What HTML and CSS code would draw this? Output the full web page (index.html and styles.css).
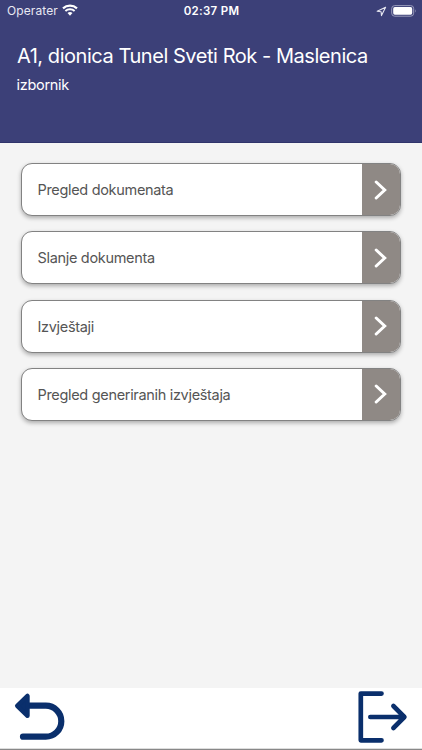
FILE: index.html
```html
<!DOCTYPE html>
<html lang="hr">
<head>
<meta charset="utf-8">
<meta name="viewport" content="width=device-width, initial-scale=1">
<title>A1, dionica Tunel Sveti Rok - Maslenica</title>
<link rel="stylesheet" href="styles.css">
</head>
<body>
<header class="header">
  <div class="status">
    <div class="status-left">
      <span class="carrier">Operater</span>
      <svg class="wifi" width="16" height="12" viewBox="0 0 16 12">
        <path d="M1 4.4C5 .7 11 .7 15 4.4" fill="none" stroke="#fff" stroke-width="2.2"/>
        <path d="M3.4 7C6 4.7 10 4.7 12.6 7" fill="none" stroke="#fff" stroke-width="2"/>
        <path d="M5.5 9.1Q8 7 10.5 9.1L8 11.7Z" fill="#fff"/>
      </svg>
    </div>
    <span class="clock">02:37 PM</span>
    <div class="status-right">
      <svg width="11" height="11" viewBox="0 0 11 11">
        <path d="M9.6 1.2 1.2 5.3 5.1 5.8 5.5 9.6Z" fill="none" stroke="#e6e6f0" stroke-width="1.1" stroke-linejoin="round"/>
      </svg>
      <svg width="26" height="12" viewBox="0 0 26 12">
        <rect x=".7" y=".6" width="22" height="10.6" rx="3" fill="none" stroke="#9a9cbc"/>
        <rect x="2.2" y="2.1" width="19" height="7.6" rx="1.6" fill="#fff"/>
        <path d="M24 4.2q1.5 1.7 0 3.4z" fill="#9a9cbc"/>
      </svg>
    </div>
  </div>
  <h1 class="title">A1, dionica Tunel Sveti Rok - Maslenica</h1>
  <p class="subtitle">izbornik</p>
</header>
<main class="menu">
  <a class="card"><span class="label">Pregled dokumenata</span><span class="go"><svg width="14" height="20" viewBox="0 0 14 20"><path d="M2.2 2 10.7 10 2.2 18"/></svg></span></a>
  <a class="card"><span class="label">Slanje dokumenta</span><span class="go"><svg width="14" height="20" viewBox="0 0 14 20"><path d="M2.2 2 10.7 10 2.2 18"/></svg></span></a>
  <a class="card"><span class="label">Izvještaji</span><span class="go"><svg width="14" height="20" viewBox="0 0 14 20"><path d="M2.2 2 10.7 10 2.2 18"/></svg></span></a>
  <a class="card"><span class="label">Pregled generiranih izvještaja</span><span class="go"><svg width="14" height="20" viewBox="0 0 14 20"><path d="M2.2 2 10.7 10 2.2 18"/></svg></span></a>
</main>
<footer class="toolbar">
  <svg class="back" width="52" height="50" viewBox="14 692 52 50">
    <path d="M28 705.7H45.8A15.5 15.5 0 0 1 45.8 736.7H23" fill="none" stroke="#0a2f6c" stroke-width="6.2" stroke-linecap="round"/>
    <path d="M17.2 705.8 27.5 695.9V715.8Z" fill="#0a2f6c" stroke="#0a2f6c" stroke-width="4.4" stroke-linejoin="round"/>
  </svg>
  <svg width="52" height="54" viewBox="357 690 52 54">
    <path d="M381.5 693.6H360.8V740.3H381.5" fill="none" stroke="#0a2f6c" stroke-width="4.7" stroke-linecap="round" stroke-linejoin="round"/>
    <path d="M370.3 717H403M393.4 706 404.4 717 393.4 728" fill="none" stroke="#0a2f6c" stroke-width="4.6" stroke-linecap="round" stroke-linejoin="round"/>
  </svg>
</footer>
</body>
</html>
```
FILE: styles.css
```css
* { box-sizing: border-box; }
body {
  margin: 0;
  width: 422px;
  height: 750px;
  display: flex;
  flex-direction: column;
  overflow: hidden;
  background: #f4f4f4;
  font-family: Inter, "Liberation Sans", sans-serif;
}
.header { height: 143px; background: #3c4078; color: #fff; border-bottom: 1px solid #30346b; }
.status {
  display: grid;
  grid-template-columns: 1fr auto 1fr;
  align-items: center;
  height: 22px;
  padding: 0 6px 0 7px;
  font-size: 12px;
  line-height: 22px;
}
.status-left { display: flex; align-items: center; gap: 4px; }
.carrier { color: #e8e8f2; letter-spacing: 0.1px; }
.wifi { margin-top: -2px; }
.clock { font-weight: 600; font-size: 11.5px; letter-spacing: 0.3px; }
.status-right { display: flex; align-items: center; justify-content: flex-end; gap: 4px; margin-right: -1px; }
.title { margin: 21px 0 0 17px; font-size: 20px; line-height: 26px; font-weight: 400; letter-spacing: -0.45px; white-space: nowrap; }
.subtitle { margin: 6px 0 0 16.5px; font-size: 14.5px; line-height: 20px; letter-spacing: -0.3px; }
.menu { flex: 1; display: flex; flex-direction: column; gap: 15.2px; padding: 20.3px 21px 0 21px; }
.card {
  display: flex;
  height: 53px;
  flex: none;
  border: 1px solid #828282;
  border-radius: 11px;
  overflow: hidden;
  background: #fff;
  box-shadow: 0 2px 4px rgba(0, 0, 0, .3);
}
.label { flex: 1; padding-left: 15.5px; font-size: 14.5px; letter-spacing: -0.32px; line-height: 51px; color: #555; white-space: nowrap; }
.go { width: 38px; display: flex; align-items: center; justify-content: center; background: #8f8985; }
.go path { fill: none; stroke: #fff; stroke-width: 3; stroke-linecap: round; stroke-linejoin: miter; }
.toolbar {
  height: 62px;
  display: flex;
  justify-content: space-between;
  padding: 2px 13px 0 14px;
  background: #fff;
  border-bottom: 1px solid #888;
  box-shadow: inset 0 -1px #ddd;
}
.back { margin-top: 2px; }
```
